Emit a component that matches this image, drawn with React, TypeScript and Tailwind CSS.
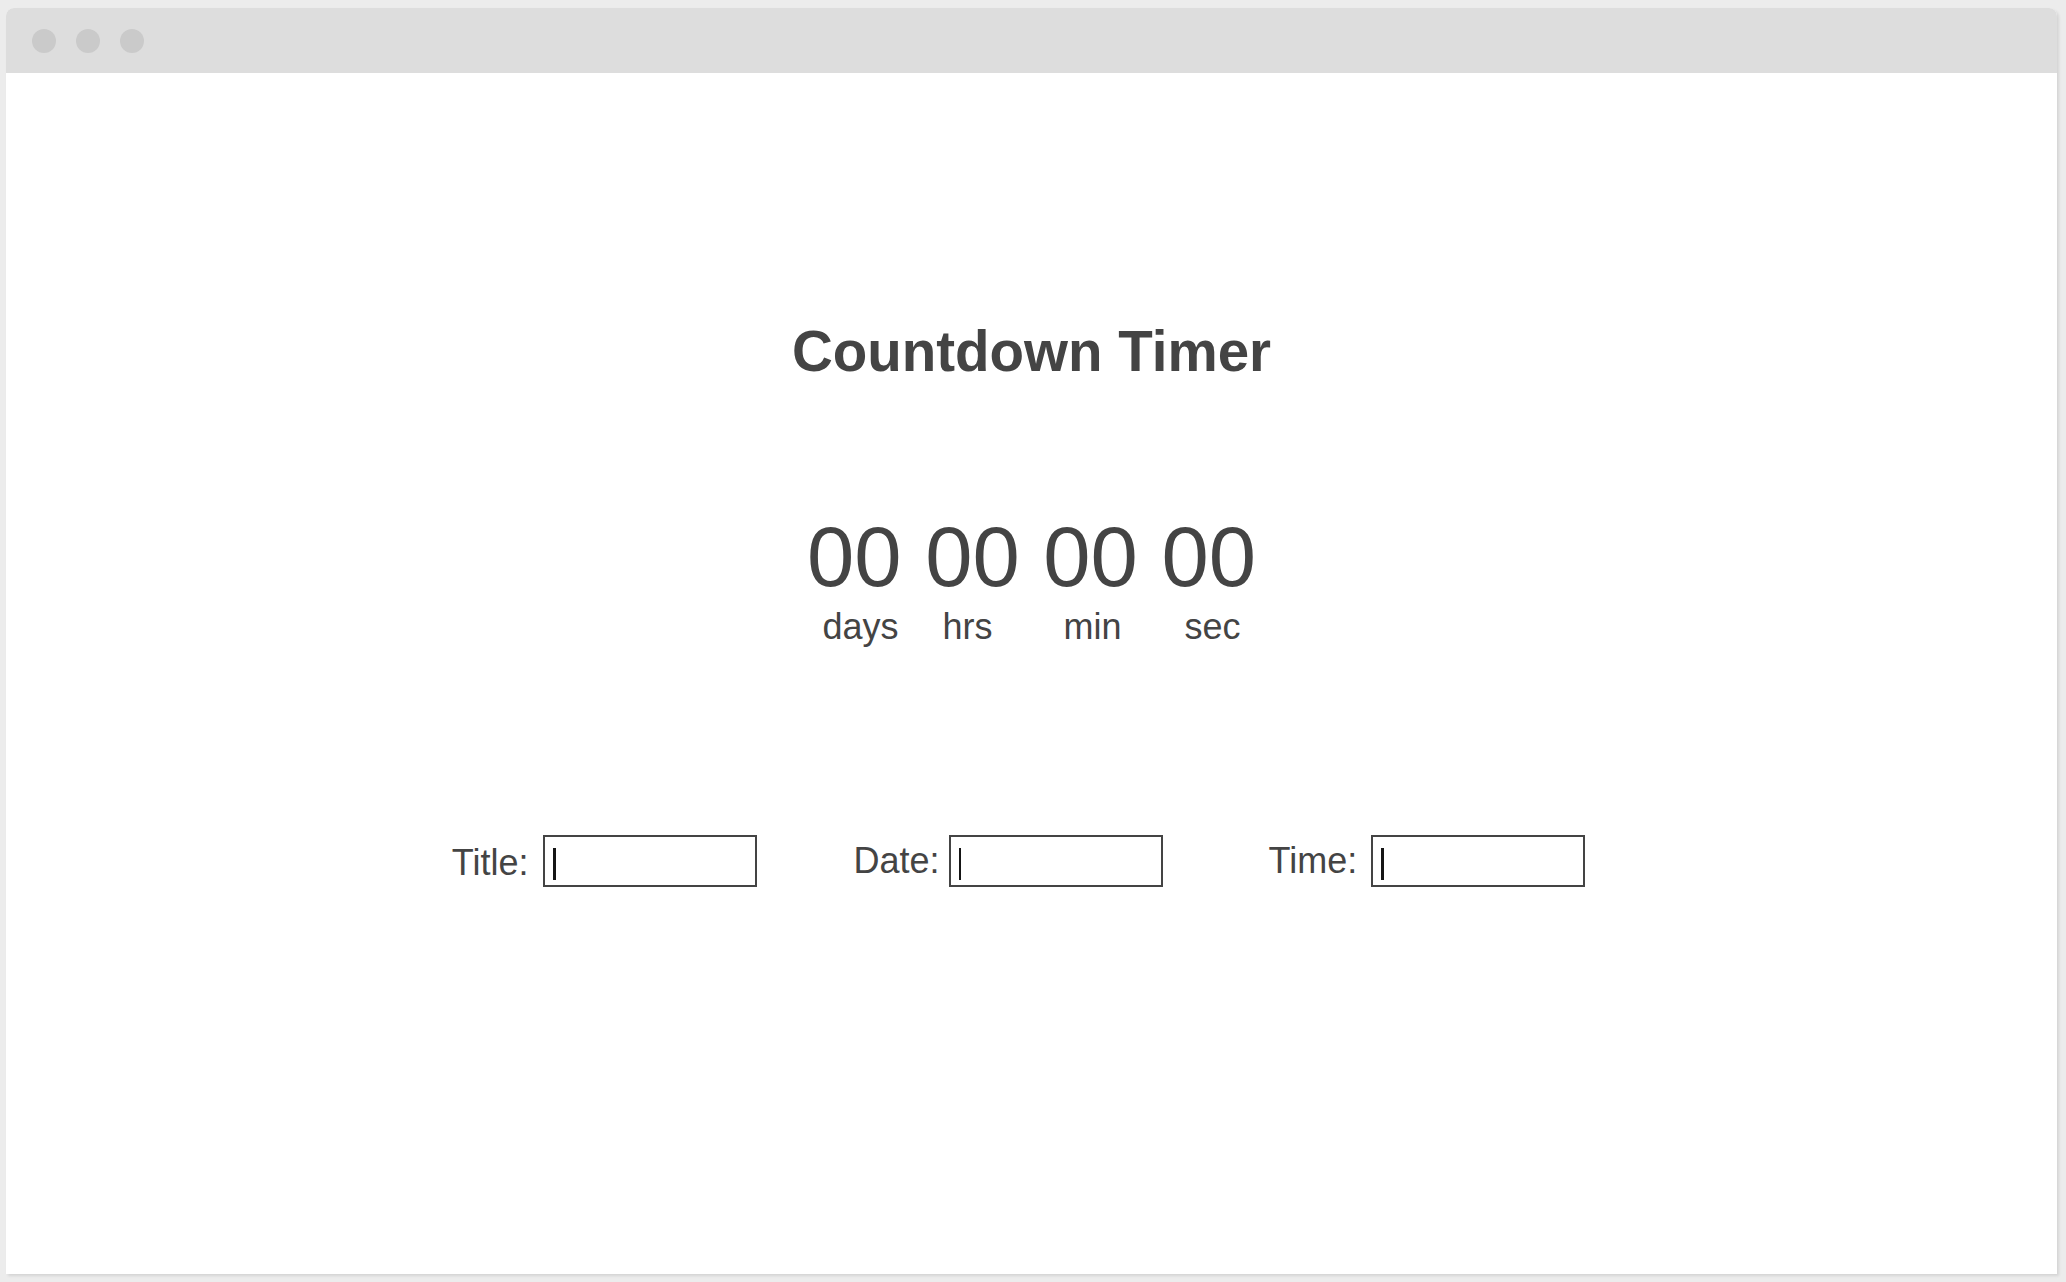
import React from 'react';

const font = { fontFamily: '"Liberation Sans", Arial, sans-serif' };

function Field({ label, gap, nudge, caret }: { label: string; gap: string; nudge?: string; caret: string }) {
  return (
    <div className="flex items-center">
      <span className={`text-[36px] leading-none ${nudge ?? ''}`}>{label}</span>
      <div className={`${gap} w-[214px] h-[52px] border-2 border-[#444] flex items-start pt-[11px] ${caret}`}>
        <div className="w-[2.5px] h-[32px] bg-[#151515]" />
      </div>
    </div>
  );
}

export default function App() {
  return (
    <div className="min-h-screen bg-[#ececec] pt-[8px] pl-[6px] pr-[9px] pb-[8px]" style={font}>
      {/* Window */}
      <div className="h-[1266px] flex flex-col bg-white rounded-t-[8px] shadow-[2px_2px_3px_rgba(0,0,0,0.1)] overflow-hidden">
        {/* Title bar */}
        <div className="h-[65px] bg-[#dddddd] flex items-center gap-[20px] pl-[26px] shrink-0">
          <div className="w-[24px] h-[24px] rounded-full bg-[#cacaca]" />
          <div className="w-[24px] h-[24px] rounded-full bg-[#cacaca]" />
          <div className="w-[24px] h-[24px] rounded-full bg-[#cacaca]" />
        </div>

        {/* Content */}
        <main className="flex-1 flex flex-col items-center text-[#444444]">
          <h1 className="mt-[251px] text-[56.5px] leading-none font-bold">Countdown Timer</h1>

          <div className="mt-[133.5px] text-[85px] leading-none whitespace-pre">00 00 00 00</div>
          <div className="mt-[10px] flex text-[36px] leading-none">
            <span>days</span>
            <span className="ml-[44px]">hrs</span>
            <span className="ml-[71px]">min</span>
            <span className="ml-[63px]">sec</span>
          </div>

          <div className="mt-[190px] w-full flex justify-center pr-[26px]">
            <Field label="Title:" gap="ml-[15px]" nudge="mt-[4px]" caret="pl-[8px]" />
            <div className="ml-[96px]">
              <Field label="Date:" gap="ml-[9px]" caret="pl-[8px]" />
            </div>
            <div className="ml-[106px]">
              <Field label="Time:" gap="ml-[14px]" caret="pl-[8px]" />
            </div>
          </div>
        </main>
      </div>
    </div>
  );
}
